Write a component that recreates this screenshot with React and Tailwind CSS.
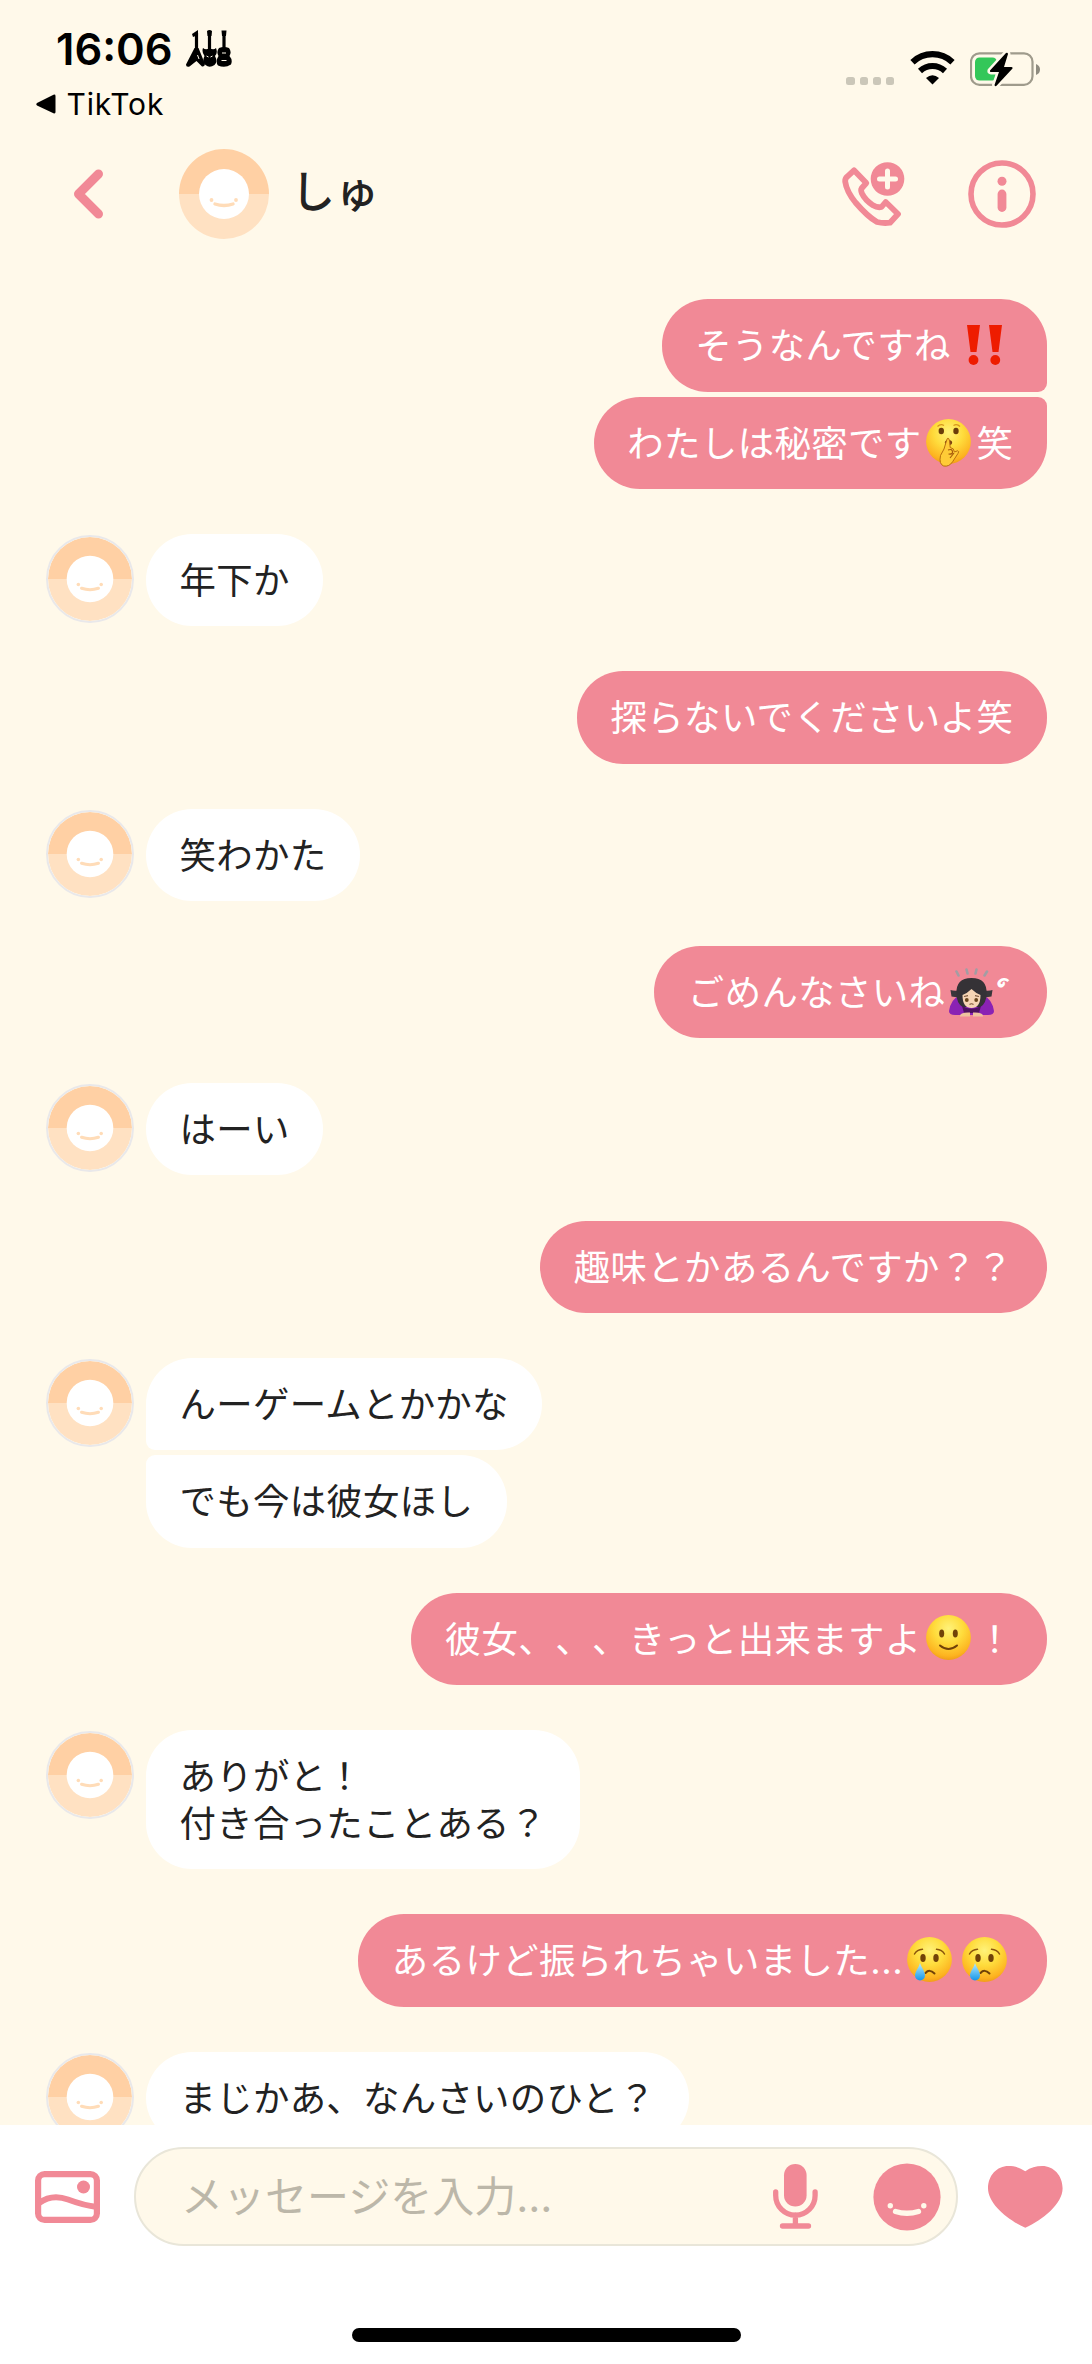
import clsx from "clsx";

const emojiClass = "inline-block w-[45px] h-[45px] ml-[4px] mr-[6px] -my-[10px] align-middle relative -top-[5px] overflow-visible";

function EmojiFills() {
  return (
    <svg width="0" height="0" className="absolute">
      <defs>
        <radialGradient id="face" cx="0.5" cy="0.3" r="0.72">
          <stop offset="0" stopColor="#fff27a" />
          <stop offset="0.45" stopColor="#ffdc3c" />
          <stop offset="0.85" stopColor="#fdb320" />
          <stop offset="1" stopColor="#ef9a17" />
        </radialGradient>
        <linearGradient id="tear" x1="0" y1="0" x2="0" y2="1">
          <stop offset="0" stopColor="#b6ecff" />
          <stop offset="1" stopColor="#1496ea" />
        </linearGradient>
      </defs>
    </svg>
  );
}

function Shush() {
  return (
    <svg viewBox="0 0 45 45" className={emojiClass}>
      <circle cx="22.5" cy="22.5" r="22.4" fill="url(#face)" />
      <ellipse cx="15.3" cy="12" rx="2.7" ry="3.2" fill="#6a3d09" />
      <ellipse cx="30" cy="12" rx="2.7" ry="3.2" fill="#6a3d09" />
      <path d="M11.5 7.5q3-3 6.5-1M27.5 6.5q3.5-2 6.5 1" fill="none" stroke="#d7951c" strokeWidth="1.2" />
      <ellipse cx="22.5" cy="23.5" rx="3.6" ry="2.6" fill="#7a3f12" />
      <path
        d="M20.4 22q1.6-6 3.2 0l.6 6.5q4 .5 4.2 4.5l3.2-1.2q2 .4.3 2.8l-5.200 8q-3.600 5.500-9 4.400q-5-1.800-3.200-10.500l3.500-6.500z"
        fill="#ffcb37"
        stroke="#b86e10"
        strokeWidth="1"
      />
      <path d="M22 31q4-1.5 4.5 1.500t-4 2.500M24 39l4-5" fill="none" stroke="#a85d0c" strokeWidth="1.2" />
    </svg>
  );
}

function Smile() {
  return (
    <svg viewBox="0 0 45 45" className={emojiClass}>
      <circle cx="22.5" cy="22.5" r="22.4" fill="url(#face)" />
      <ellipse cx="15.7" cy="18.5" rx="2.5" ry="3.9" fill="#714208" />
      <ellipse cx="29.3" cy="18.5" rx="2.5" ry="3.9" fill="#714208" />
      <path d="M14 30.5q8.5 7 17 0" fill="none" stroke="#714208" strokeWidth="2" strokeLinecap="round" />
    </svg>
  );
}

function Cry() {
  return (
    <svg viewBox="0 0 45 45" className={emojiClass}>
      <circle cx="22.5" cy="22.5" r="22.4" fill="url(#face)" />
      <ellipse cx="16" cy="21" rx="2.7" ry="3.9" fill="#714208" />
      <ellipse cx="29" cy="21" rx="2.7" ry="3.9" fill="#714208" />
      <path d="M7.5 17q2.5-4.5 8-4.8M29.5 12.2q5.5.3 8 4.8" fill="none" stroke="#8a540c" strokeWidth="1.5" strokeLinecap="round" />
      <path d="M18.5 36q4-4.5 9 .5" fill="none" stroke="#714208" strokeWidth="2" strokeLinecap="round" />
      <path d="M13 26c2 5.5 5 8.5 5 12.5a5 5 0 0 1-10 0c0-4 3.5-7 5-12.5z" fill="url(#tear)" />
    </svg>
  );
}

function Bow() {
  return (
    <svg viewBox="0 0 45 49" className="inline-block w-[45px] h-[49px] ml-[4px] -my-[12px] align-middle relative -top-[4px]">
      <path d="M7.5 3.5l2 4M17.5 1.5l1 4M27.5 1.5l-1 4M38 3.5l-2.5 4" stroke="#a39da3" strokeWidth="2.6" strokeLinecap="round" />
      <path d="M0 43q2-12 10-15h25q8 3 10 15q0 4-6 4H6Q0 47 0 43z" fill="#8a22b4" />
      <path d="M1.500 22q3 1 8 .5v7l-7-1zM43.500 22q-3 1-8 .5v7l7-1z" fill="#39363a" />
      <path d="M7.500 26Q6.500 10 22.500 10T37.500 26q0 9-6 13h-18Q7.500 35 7.500 26z" fill="#353236" />
      <path d="M22.500 21q-4 4-9 6q0 13 9 13t9-13q-5-2-9-6z" fill="#f6d5b4" />
      <circle cx="17.8" cy="32" r="1.9" fill="#67451b" />
      <circle cx="27.2" cy="32" r="1.9" fill="#67451b" />
      <path d="M15 28.500l4-.8M30 28.500l-4-.8M20.500 36.500q2-1.500 4 0" fill="none" stroke="#7b563a" strokeWidth="1.2" />
      <path d="M13 38q9.500 5.500 19 0l-2 7H15z" fill="#4d1160" />
      <path d="M11 48q0-4 10-3.500v4h-10zM34 48q0-4-10-3.500v4h10z" fill="#efc29f" />
    </svg>
  );
}

function DoubleBang() {
  return (
    <svg viewBox="0 0 36 40" className="inline-block w-[36px] h-[40px] ml-[16.5px] mr-[10px] -my-[8px] align-middle relative -top-[4px]">
      <path d="M0 0h13L9.5 27h-6zM22 0h13l-3.5 27h-6z" fill="#ee1c00" />
      <circle cx="6.5" cy="35" r="4.9" fill="#ee1c00" />
      <circle cx="28.3" cy="35" r="4.9" fill="#ee1c00" />
    </svg>
  );
}

const groups = [
  {
    mine: true,
    messages: [
      <>そうなんですね<DoubleBang /></>,
      <>わたしは秘密です<Shush />笑</>,
    ],
  },
  { messages: ["年下か"] },
  { mine: true, messages: ["探らないでくださいよ笑"] },
  { messages: ["笑わかた"] },
  {
    mine: true,
    messages: [
      <>
        ごめんなさいね<Bow />
        <span className="inline-block w-[13px] ml-[6px] -my-[10px] text-[26px] leading-none font-bold font-['DejaVu_Sans'] relative -top-[6px] -left-[1px] -rotate-45 -scale-x-100 origin-[50%_30%]">՞</span>
      </>,
    ],
  },
  { messages: ["はーい"] },
  { mine: true, messages: ["趣味とかあるんですか？？"] },
  { messages: ["んーゲームとかかな", "でも今は彼女ほし"] },
  { mine: true, messages: [<>彼女、、、きっと出来ますよ<Smile />！</>] },
  { messages: ["ありがと！\n付き合ったことある？"] },
  {
    mine: true,
    messages: [
      <>あるけど振られちゃいました<span className="tracking-[0.6px]">...</span><Cry /><Cry /></>,
    ],
  },
  { messages: ["まじかあ、なんさいのひと？"] },
];

function Avatar({ className }) {
  return (
    <svg viewBox="0 0 90 90" className={className}>
      <path d="M0 45a45 45 0 0 1 90 0z" fill="#ffd0a4" />
      <path d="M0 45a45 45 0 0 0 90 0z" fill="#ffe1c2" />
      <circle cx="45" cy="45" r="25" fill="#fff" />
      <circle cx="32.5" cy="51" r="1.9" fill="#ffdcb8" />
      <circle cx="57" cy="51" r="1.9" fill="#ffdcb8" />
      <path d="M36 55q9 3 18 0" fill="none" stroke="#ffdcb8" strokeWidth="3.4" strokeLinecap="round" />
    </svg>
  );
}

function Bubble({ mine, index, count, children }) {
  return (
    <div
      className={clsx(
        "w-fit px-[33.6px] pt-[24px] pb-[21px] text-[36.4px] leading-[47.2px] whitespace-pre rounded-[46px]",
        mine ? "bg-[#f18996] text-white tracking-[0.4px]" : "bg-white text-[#222] tracking-[0.3px]",
        mine && index < count - 1 && "rounded-br-[9px]",
        mine && index > 0 && "rounded-tr-[9px]",
        !mine && index < count - 1 && "rounded-bl-[9px]",
        !mine && index > 0 && "rounded-tl-[9px]"
      )}
    >
      {children}
    </div>
  );
}

function MessageGroup({ mine, messages }) {
  return (
    <div className={clsx("flex", mine ? "justify-end" : "justify-start")}>
      {!mine && (
        <Avatar className="w-[88px] h-[88px] mt-[1px] mr-[12px] shrink-0 rounded-full border-[2.5px] border-[#e9e8ea]" />
      )}
      <div className={clsx("flex flex-col gap-[5.3px]", mine ? "items-end" : "items-start")}>
        {messages.map((message, i) => (
          <Bubble key={i} mine={mine} index={i} count={messages.length}>
            {message}
          </Bubble>
        ))}
      </div>
    </div>
  );
}

function Guitars() {
  return (
    <svg viewBox="0 0 46 38" className="w-[46px] h-[38px]">
      <g stroke="#000" strokeWidth="3.2" fill="none">
        <path d="M10.5 3v18M23.5 2v18M38 2v18" />
      </g>
      <path d="M6 4l6-4v5l-5 2zM21 1q2.5-2 5 0l-.5 5h-4zM35.5.5h5L40 6h-4z" />
      <path d="M8.5 18h4l6.5 16q-.5 3-3 2.5L10.5 31l-7 5.5Q0 37.5 0 34.5z" />
      <path d="M17 18q3 2.5 6.5 0q4 2.5 6.5 0q2 5-1 8q3 6-.5 9q-5 3.5-9 0q-4-3-1-9q-3-4-1.5-8z" />
      <path d="M33 18q5-2 10 0q3 4 .5 8q3.5 4 1.5 8.5q-6 4-13 1q-3-4 .5-9.500q-2.500-4 .5-8z" />
      <path d="M36 23h4M35.5 30.5h5M11.5 25l1.5 4M20.5 26l2 1M26.5 26l-2 1" stroke="#fff9ea" strokeWidth="1" fill="none" />
    </svg>
  );
}

function StatusBar() {
  return (
    <div className="h-[140px] flex justify-between pl-[36px] pr-[51px] text-black">
      <div className="pt-[22px]">
        <div className="flex items-center pl-[20px] h-[54px]">
          <span className="text-[43.5px] leading-[54px] font-semibold w-[130px]">16:06</span>
          <Guitars />
        </div>
        <div className="flex items-center gap-[10.5px] h-[40px] mt-[8px]">
          <svg viewBox="0 0 20 20" className="w-[20px] h-[20px]">
            <path d="M1 9L17.5.7Q19.5 0 19.5 2v16q0 2-2 1.3L1 11.5Q-.5 10.3 1 9z" />
          </svg>
          <span className="text-[30px] leading-[40px] tracking-[0.8px]">TikTok</span>
        </div>
      </div>
      <div className="flex pt-[51px]">
        <div className="flex gap-[4.8px] mt-[25.5px] mr-[15.5px]">
          {[0, 1, 2, 3].map((dot) => (
            <div key={dot} className="w-[8.3px] h-[8.3px] rounded-[2.5px] bg-[#cbc7b9]" />
          ))}
        </div>
        <svg viewBox="0 0 45 34" className="w-[45px] h-[34px] mr-[15.5px]">
          <path d="M2.5 11.2Q11 3.2 22.5 3.200t20 8" fill="none" stroke="#000" strokeWidth="6.2" />
          <path d="M10 20q5.5-5 12.5-5t12.5 5" fill="none" stroke="#000" strokeWidth="6" />
          <path d="M16 27q6.5-5.6 13 0l-6.5 6.6z" />
        </svg>
        <svg viewBox="0 0 71 36" className="w-[71px] h-[36px]">
          <rect x="1" y="2.3" width="61.5" height="31.5" rx="8.5" fill="none" stroke="#9f9b8c" strokeWidth="2.2" />
          <path d="M66 13q4 1.5 4 5.5t-4 5.5z" fill="#8f8c80" />
          <rect x="5" y="6.5" width="22" height="23" rx="4.5" fill="#34c759" />
          <path
            d="M36 2L20 19.5q-.5 1.5 1 1.5h8l-4.5 13q.5 2 2 .8L42.500 17.500q.5-1.500-1-1.500h-7.500L38 3q-.3-2-2-1z"
            stroke="#fff9ea"
            strokeWidth="5"
            paintOrder="stroke"
          />
        </svg>
      </div>
    </div>
  );
}

function Header() {
  return (
    <div className="h-[107px] flex items-center pl-[73px] pr-[56px] text-[#f18996]">
      <svg viewBox="0 0 31 50" className="w-[31px] h-[50px] mr-[75px]">
        <path d="M25.5 5L5.5 25l20 20" fill="none" stroke="currentColor" strokeWidth="9" strokeLinecap="round" strokeLinejoin="round" />
      </svg>
      <Avatar className="w-[90px] h-[90px] mr-[22px]" />
      <div className="flex-1 -mt-[3px] text-[#222] text-[44px] leading-[56px] font-medium">しゅ</div>
      <svg viewBox="0 0 66 67" className="w-[66px] h-[67px] mr-[62px]">
        <path
          d="M14 10.3L26.3 23L21.5 28.5Q20.5 30 22 33.5Q25 40 33 45.3Q37.5 48 41.5 47L45.7 42L58 54L50 62.7Q43 63.5 37 62Q28 57 15.5 42.5Q6.5 31.5 5.2 21.7Q5 18.5 7 16.8z"
          fill="none"
          stroke="currentColor"
          strokeWidth="5.8"
          strokeLinejoin="round"
        />
        <circle cx="47.5" cy="19" r="16.8" fill="currentColor" />
        <path d="M47.5 11v16M39.5 19h16" stroke="#fff9ea" strokeWidth="5" strokeLinecap="round" />
      </svg>
      <svg viewBox="0 0 68 68" className="w-[68px] h-[68px]">
        <circle cx="34" cy="34" r="31" fill="none" stroke="currentColor" strokeWidth="5.6" />
        <circle cx="34" cy="21.3" r="4.5" fill="currentColor" />
        <path d="M34 34v13.5" stroke="currentColor" strokeWidth="8.8" strokeLinecap="round" />
      </svg>
    </div>
  );
}

function Footer() {
  return (
    <div className="h-[239px] shrink-0 bg-white pt-[22px] text-[#f18996]">
      <div className="flex items-center pl-[35px] h-[99px]">
        <svg viewBox="0 0 65 52" className="w-[65px] h-[52px] mr-[34px]">
          <rect x="3.1" y="3.1" width="58.8" height="45.8" rx="6.5" fill="none" stroke="currentColor" strokeWidth="6.2" />
          <path d="M4 32Q17 22.5 33 28.500T62 36" fill="none" stroke="currentColor" strokeWidth="6" />
          <circle cx="48.5" cy="16" r="6.5" fill="currentColor" />
        </svg>
        <div className="w-[824px] h-[99px] flex items-center rounded-full border-[2.5px] border-[#e9e6d9] bg-[#fff9ea] pl-[45px] pr-[15px]">
          <span className="flex-1 text-[42px] leading-[56px] text-[#bcb7a9]">メッセージを入力...</span>
          <svg viewBox="0 0 45 65" className="w-[45px] h-[65px] mr-[55px]">
            <rect x="11" y="0" width="22.6" height="42.5" rx="11.3" fill="currentColor" />
            <path d="M2.7 28v3.5a19.6 19.6 0 0 0 39.4 0V28M22.4 51v10M9.5 62h26" fill="none" stroke="currentColor" strokeWidth="5.3" strokeLinecap="round" />
          </svg>
          <svg viewBox="0 0 68 68" className="w-[68px] h-[68px]">
            <circle cx="34" cy="34" r="33.6" fill="currentColor" />
            <circle cx="17.3" cy="42.7" r="2.7" fill="#fff9ea" />
            <circle cx="50.8" cy="42.7" r="2.7" fill="#fff9ea" />
            <path d="M22.5 48.5q11.5 3.5 23 0" fill="none" stroke="#fff9ea" strokeWidth="5.3" strokeLinecap="round" />
          </svg>
        </div>
        <svg viewBox="0 0 75 62" className="w-[75px] h-[62px] ml-[29.5px]">
          <path d="M37.3 5.3C32 1.5 26.5 0 20.4 0C9 0 0 9.5 0 22.3C0 38 20 54 37.3 61.8C54.6 54 74.6 38 74.6 22.3C74.6 9.5 65.6 0 54.2 0C48 0 42.6 1.5 37.3 5.3z" fill="currentColor" />
        </svg>
      </div>
      <div className="w-[389px] h-[14px] mt-[81.5px] mx-auto rounded-full bg-black" />
    </div>
  );
}

export default function App() {
  return (
    <div
      lang="ja"
      className="w-[1092px] h-[2364px] flex flex-col overflow-hidden bg-[#fff9ea] font-['Inter','Noto_Sans_CJK_JP',sans-serif] [text-spacing-trim:space-all]"
    >
      <EmojiFills />
      <StatusBar />
      <Header />
      <div className="flex-1 min-h-0 overflow-hidden pt-[52.3px] pl-[46px] pr-[45px] flex flex-col gap-[45.1px]">
        {groups.map((group, i) => (
          <MessageGroup key={i} {...group} />
        ))}
      </div>
      <Footer />
    </div>
  );
}
